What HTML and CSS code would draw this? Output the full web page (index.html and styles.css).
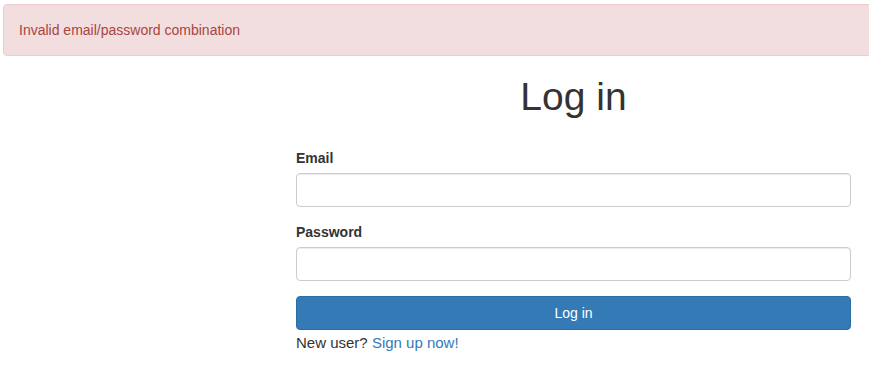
FILE: index.html
```html
<!DOCTYPE html>
<html lang="en">
<head>
    <meta charset="UTF-8">
    <title>Log in</title>
    <link rel="stylesheet" href="styles.css">
</head>
<body>
<div class="alert alert-danger">Invalid email/password combination</div>

<div class="login-wrap">
    <h1 class="login-title">Log in</h1>
    <form class="login-form">
        <div class="form-group">
            <label for="email">Email</label>
            <input class="form-control" type="email" id="email">
        </div>
        <div class="form-group">
            <label for="password">Password</label>
            <input class="form-control" type="password" id="password">
        </div>
        <button class="btn-primary" type="submit">Log in</button>
    </form>
    <p class="signup">New user? <a href="#">Sign up now!</a></p>
</div>
</body>
</html>
```

FILE: styles.css
```css
* {
    box-sizing: border-box;
}
body {
    margin: 0;
    font-family: 'Liberation Sans', Arial, sans-serif;
    font-size: 14px;
    line-height: 20px;
    color: #333;
    background: #fff;
    overflow-x: hidden;
}
.alert {
    margin: 4px -20px 0 3px;
    padding: 15px;
    border: 1px solid #ebccd1;
    border-radius: 4px;
}
.alert-danger {
    background-color: #f2dede;
    color: #a94442;
}
.login-wrap {
    width: 555px;
    margin-left: 296px;
}
.login-title {
    text-align: center;
    font-size: 39px;
    font-weight: normal;
    line-height: 44px;
    margin: 19px 0 29px;
}
.form-group {
    margin-bottom: 15px;
}
label {
    display: block;
    font-weight: bold;
    margin-bottom: 5px;
}
.form-control {
    display: block;
    width: 100%;
    height: 34px;
    padding: 6px 12px;
    font-family: inherit;
    font-size: 14px;
    border: 1px solid #ccc;
    border-radius: 4px;
    box-shadow: inset 0 1px 1px rgba(0, 0, 0, .075);
}
.btn-primary {
    display: block;
    width: 100%;
    height: 34px;
    padding: 6px 12px;
    font-family: inherit;
    font-size: 14px;
    color: #fff;
    background-color: #337ab7;
    border: 1px solid #2e6da4;
    border-radius: 4px;
    cursor: pointer;
}
.signup {
    margin: 2px 0 0;
    font-size: 15px;
    line-height: 22px;
}
.signup a {
    color: #337ab7;
    text-decoration: none;
}
```
